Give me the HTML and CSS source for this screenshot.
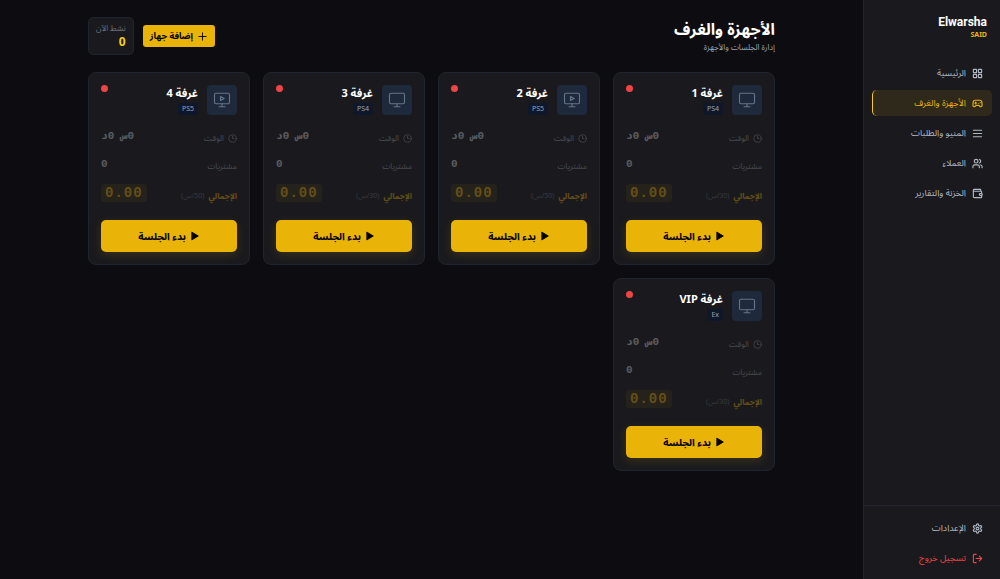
FILE: index.html
```html
<!DOCTYPE html>
<html lang="ar" dir="rtl">
<head>
    <meta charset="UTF-8">
    <meta name="viewport" content="width=device-width, initial-scale=1.0">
    <title>Elwarsha - الأجهزة والغرف</title>
    <link rel="stylesheet" href="styles.css">
</head>
<body>
    <!-- Icons -->
    <svg class="sprite" aria-hidden="true">
        <symbol id="i-grid" viewBox="0 0 24 24"><rect x="3" y="3" width="7" height="7" rx="1"/><rect x="14" y="3" width="7" height="7" rx="1"/><rect x="14" y="14" width="7" height="7" rx="1"/><rect x="3" y="14" width="7" height="7" rx="1"/></symbol>
        <symbol id="i-pad" viewBox="0 0 24 24"><path d="M6 11h4M8 9v4M15 12h.01M18 10h.01"/><path d="M17.3 5H6.7a4 4 0 0 0-4 3.6C2.6 9.400 2 14.500 2 16a3 3 0 0 0 3 3c1 0 1.500-.5 2-1l1.400-1.400A2 2 0 0 1 9.800 16h4.400a2 2 0 0 1 1.400.6L17 18c.5.5 1 1 2 1a3 3 0 0 0 3-3c0-1.500-.6-6.600-.7-7.400A4 4 0 0 0 17.300 5z"/></symbol>
        <symbol id="i-menu" viewBox="0 0 24 24"><path d="M3 5h18M3 12h18M3 19h18"/></symbol>
        <symbol id="i-users" viewBox="0 0 24 24"><path d="M16 21v-2a4 4 0 0 0-4-4H6a4 4 0 0 0-4 4v2"/><circle cx="9" cy="7" r="4"/><path d="M22 21v-2a4 4 0 0 0-3-3.870M16 3.130a4 4 0 0 1 0 7.750"/></symbol>
        <symbol id="i-wallet" viewBox="0 0 24 24"><path d="M19 7V4a1 1 0 0 0-1-1H5a2 2 0 0 0 0 4h15a1 1 0 0 1 1 1v4h-3a2 2 0 0 0 0 4h3a1 1 0 0 0 1-1v-2a1 1 0 0 0-1-1"/><path d="M3 5v14a2 2 0 0 0 2 2h15a1 1 0 0 0 1-1v-4"/></symbol>
        <symbol id="i-gear" viewBox="0 0 24 24"><path d="M12.220 2h-.44a2 2 0 0 0-2 2v.18a2 2 0 0 1-1 1.730l-.43.25a2 2 0 0 1-2 0l-.15-.08a2 2 0 0 0-2.730.73l-.22.38a2 2 0 0 0 .73 2.730l.15.1a2 2 0 0 1 1 1.720v.51a2 2 0 0 1-1 1.740l-.15.09a2 2 0 0 0-.73 2.730l.22.38a2 2 0 0 0 2.730.73l.15-.08a2 2 0 0 1 2 0l.43.25a2 2 0 0 1 1 1.730V20a2 2 0 0 0 2 2h.44a2 2 0 0 0 2-2v-.18a2 2 0 0 1 1-1.730l.43-.25a2 2 0 0 1 2 0l.15.08a2 2 0 0 0 2.730-.73l.22-.39a2 2 0 0 0-.73-2.730l-.15-.08a2 2 0 0 1-1-1.740v-.5a2 2 0 0 1 1-1.740l.15-.09a2 2 0 0 0 .73-2.730l-.22-.38a2 2 0 0 0-2.730-.73l-.15.08a2 2 0 0 1-2 0l-.43-.25a2 2 0 0 1-1-1.730V4a2 2 0 0 0-2-2z"/><circle cx="12" cy="12" r="3"/></symbol>
        <symbol id="i-logout" viewBox="0 0 24 24"><path d="M9 21H5a2 2 0 0 1-2-2V5a2 2 0 0 1 2-2h4M16 17l5-5-5-5M21 12H9"/></symbol>
        <symbol id="i-monitor" viewBox="0 0 24 24"><rect x="2" y="3" width="20" height="14" rx="2"/><path d="M8 21h8M12 17v4"/></symbol>
        <symbol id="i-monitor-play" viewBox="0 0 24 24"><rect x="2" y="3" width="20" height="14" rx="2"/><path d="M8 21h8M12 17v4M10 7.500v5l5-2.500z"/></symbol>
        <symbol id="i-clock" viewBox="0 0 24 24"><circle cx="12" cy="12" r="10"/><path d="M12 6v6h4"/></symbol>
        <symbol id="i-plus" viewBox="0 0 24 24"><path d="M4 12h16M12 4v16"/></symbol>
        <symbol id="i-play" viewBox="0 0 24 24"><path d="M5 3l15 9-15 9z"/></symbol>
    </svg>

    <div class="layout">
        <aside class="sidebar">
            <div class="brand">
                <div class="brand-name">Elwarsha</div>
                <div class="brand-sub">SAID</div>
            </div>
            <nav class="nav">
                <a href="#"><svg class="icon"><use href="#i-grid"/></svg>الرئيسية</a>
                <a href="#" class="active"><svg class="icon"><use href="#i-pad"/></svg>الأجهزة والغرف</a>
                <a href="#"><svg class="icon"><use href="#i-menu"/></svg>المنيو والطلبات</a>
                <a href="#"><svg class="icon"><use href="#i-users"/></svg>العملاء</a>
                <a href="#"><svg class="icon"><use href="#i-wallet"/></svg>الخزنة والتقارير</a>
            </nav>
            <div class="nav nav-bottom">
                <a href="#"><svg class="icon"><use href="#i-gear"/></svg>الإعدادات</a>
                <a href="#" class="logout"><svg class="icon"><use href="#i-logout"/></svg>تسجيل خروج</a>
            </div>
        </aside>

        <main class="main">
            <div class="container">
                <header class="header">
                    <div>
                        <h1>الأجهزة والغرف</h1>
                        <p class="subtitle">إدارة الجلسات والأجهزة</p>
                    </div>
                    <div class="actions">
                        <button class="btn-add"><svg class="icon"><use href="#i-plus"/></svg>إضافة جهاز</button>
                        <div class="stat">
                            <div class="stat-label">نشط الآن</div>
                            <div class="stat-value">0</div>
                        </div>
                    </div>
                </header>

                <div class="grid">
                    <article class="card">
                        <div class="card-head">
                            <div class="device"><svg class="icon"><use href="#i-monitor"/></svg></div>
                            <div class="info"><h2>غرفة 1</h2><span class="tag">PS4</span></div>
                            <span class="dot"></span>
                        </div>
                        <div class="details">
                            <div class="row"><span class="label"><svg class="icon"><use href="#i-clock"/></svg>الوقت</span><span class="value">0س 0د</span></div>
                            <div class="row"><span class="label">مشتريات</span><span class="value">0</span></div>
                            <div class="row total"><span class="label"><b>الإجمالي</b><small>(30/س)</small></span><span class="price">0.00</span></div>
                        </div>
                        <button class="btn-start"><svg class="icon"><use href="#i-play"/></svg>بدء الجلسة</button>
                    </article>
                    <article class="card">
                        <div class="card-head">
                            <div class="device"><svg class="icon"><use href="#i-monitor-play"/></svg></div>
                            <div class="info"><h2>غرفة 2</h2><span class="tag">PS5</span></div>
                            <span class="dot"></span>
                        </div>
                        <div class="details">
                            <div class="row"><span class="label"><svg class="icon"><use href="#i-clock"/></svg>الوقت</span><span class="value">0س 0د</span></div>
                            <div class="row"><span class="label">مشتريات</span><span class="value">0</span></div>
                            <div class="row total"><span class="label"><b>الإجمالي</b><small>(50/س)</small></span><span class="price">0.00</span></div>
                        </div>
                        <button class="btn-start"><svg class="icon"><use href="#i-play"/></svg>بدء الجلسة</button>
                    </article>
                    <article class="card">
                        <div class="card-head">
                            <div class="device"><svg class="icon"><use href="#i-monitor"/></svg></div>
                            <div class="info"><h2>غرفة 3</h2><span class="tag">PS4</span></div>
                            <span class="dot"></span>
                        </div>
                        <div class="details">
                            <div class="row"><span class="label"><svg class="icon"><use href="#i-clock"/></svg>الوقت</span><span class="value">0س 0د</span></div>
                            <div class="row"><span class="label">مشتريات</span><span class="value">0</span></div>
                            <div class="row total"><span class="label"><b>الإجمالي</b><small>(30/س)</small></span><span class="price">0.00</span></div>
                        </div>
                        <button class="btn-start"><svg class="icon"><use href="#i-play"/></svg>بدء الجلسة</button>
                    </article>
                    <article class="card">
                        <div class="card-head">
                            <div class="device"><svg class="icon"><use href="#i-monitor-play"/></svg></div>
                            <div class="info"><h2>غرفة 4</h2><span class="tag">PS5</span></div>
                            <span class="dot"></span>
                        </div>
                        <div class="details">
                            <div class="row"><span class="label"><svg class="icon"><use href="#i-clock"/></svg>الوقت</span><span class="value">0س 0د</span></div>
                            <div class="row"><span class="label">مشتريات</span><span class="value">0</span></div>
                            <div class="row total"><span class="label"><b>الإجمالي</b><small>(50/س)</small></span><span class="price">0.00</span></div>
                        </div>
                        <button class="btn-start"><svg class="icon"><use href="#i-play"/></svg>بدء الجلسة</button>
                    </article>
                    <article class="card">
                        <div class="card-head">
                            <div class="device"><svg class="icon"><use href="#i-monitor"/></svg></div>
                            <div class="info"><h2>غرفة VIP</h2><span class="tag">Ex</span></div>
                            <span class="dot"></span>
                        </div>
                        <div class="details">
                            <div class="row"><span class="label"><svg class="icon"><use href="#i-clock"/></svg>الوقت</span><span class="value">0س 0د</span></div>
                            <div class="row"><span class="label">مشتريات</span><span class="value">0</span></div>
                            <div class="row total"><span class="label"><b>الإجمالي</b><small>(30/س)</small></span><span class="price">0.00</span></div>
                        </div>
                        <button class="btn-start"><svg class="icon"><use href="#i-play"/></svg>بدء الجلسة</button>
                    </article>
                </div>
            </div>
        </main>
    </div>
</body>
</html>
```

FILE: styles.css
```css
* {
    box-sizing: border-box;
}

body {
    margin: 0;
    background-color: #0d0d11;
    color: #fff;
    font-family: "Noto Sans", "Noto Sans Arabic", sans-serif;
    font-size: 9px;
}

h1, h2, p {
    margin: 0;
}

button {
    border: none;
    font-family: inherit;
    font-weight: bold;
    color: #000;
    background-color: #eab308;
    cursor: pointer;
}

.sprite {
    display: none;
}

.icon {
    width: 11px;
    height: 11px;
    flex-shrink: 0;
    fill: none;
    stroke: currentColor;
    stroke-width: 2;
    stroke-linecap: round;
    stroke-linejoin: round;
}

.layout {
    display: flex;
    min-height: 100vh;
}

/* Sidebar */
.sidebar {
    width: 137px;
    flex-shrink: 0;
    display: flex;
    flex-direction: column;
    background-color: #1a1a1e;
    border-left: 1px solid #1f2530;
}

.brand {
    direction: ltr;
    text-align: right;
    padding: 14px 13px 19px;
    font-weight: bold;
}

.brand-name {
    font-family: Roboto, sans-serif;
    font-size: 12px;
    line-height: 16px;
}

.brand-sub {
    font-size: 7px;
    line-height: 9px;
    color: #eab308;
}

.nav {
    display: flex;
    flex-direction: column;
    gap: 4px;
    padding: 2px 8px;
}

.nav a {
    display: flex;
    align-items: center;
    gap: 6px;
    height: 26px;
    padding: 0 9px;
    border-radius: 5px;
    color: #b0b7c3;
    text-decoration: none;
}

.nav a.active {
    color: #eab308;
    background-color: #2f291b;
    border-left: 1px solid #facc15;
}

.nav .icon {
    stroke-width: 2.5;
}

.nav-bottom {
    margin-top: auto;
    border-top: 1px solid #24272f;
    padding: 9px 8px 8px;
}

.nav a.logout {
    color: #ef4444;
}

/* Page */
.main {
    flex: 1;
    padding: 17px 16px;
}

.container {
    max-width: 687px;
    margin: 0 auto;
}

.header {
    display: flex;
    justify-content: space-between;
    align-items: center;
    margin-bottom: 17px;
}

h1 {
    font-size: 16px;
    line-height: 22px;
}

.subtitle {
    font-size: 8px;
    line-height: 14px;
    color: #9ca3af;
}

.actions {
    display: flex;
    align-items: center;
    gap: 9px;
}

.btn-add {
    display: flex;
    align-items: center;
    gap: 4px;
    height: 22px;
    padding: 0 7px;
    border-radius: 3px;
    font-size: 9px;
}

.stat {
    padding: 4px 7px;
    border: 1px solid #1f2530;
    border-radius: 5px;
    background-color: #1a1a1e;
}

.stat-label {
    font-size: 8px;
    line-height: 12px;
    color: #6b7280;
}

.stat-value {
    font-size: 12px;
    line-height: 16px;
    font-weight: bold;
    color: #facc15;
}

/* Cards */
.grid {
    display: grid;
    grid-template-columns: repeat(4, 1fr);
    gap: 13px;
}

.card {
    padding: 12px;
    border: 1px solid #1f2530;
    border-radius: 8px;
    background-color: #1a1a1e;
}

.card-head {
    display: flex;
    align-items: flex-start;
    gap: 9px;
}

.device {
    display: grid;
    place-items: center;
    width: 30px;
    height: 30px;
    border-radius: 4px;
    background-color: #1e293b;
    color: #64748b;
}

.device .icon {
    width: 18px;
    height: 18px;
    stroke-width: 1.5;
}

.info {
    flex: 1;
}

h2 {
    font-size: 11px;
    line-height: 16px;
}

.tag {
    display: block;
    width: fit-content;
    margin-top: 2px;
    padding: 0 4px;
    border-radius: 2px;
    font-size: 7px;
    line-height: 12px;
    color: #94a3b8;
    background-color: #0f172a;
}

.dot {
    width: 7px;
    height: 7px;
    border-radius: 50%;
    background-color: #ef4444;
}

.details {
    margin: 6px 0 15px;
    opacity: 0.35;
}

.row {
    display: flex;
    justify-content: space-between;
    align-items: flex-end;
    height: 28px;
    padding-bottom: 5px;
}

.row.total {
    padding-bottom: 3px;
}

.label {
    display: flex;
    align-items: center;
    gap: 4px;
    font-size: 8px;
    line-height: 12px;
    color: #9ca3af;
}

.label .icon {
    width: 9px;
    height: 9px;
}

.value, .price {
    font-family: "Liberation Mono", monospace;
    font-weight: bold;
    line-height: 16px;
}

.value {
    font-size: 11px;
    color: #d1d5db;
}

.label b {
    color: #eab308;
}

.label small {
    font-size: 7px;
    color: #6b7280;
}

.price {
    padding: 0 4px;
    border-radius: 3px;
    font-size: 14px;
    line-height: 18px;
    letter-spacing: 1px;
    color: #eab308;
    background-color: #3a3018;
}

.btn-start {
    display: flex;
    align-items: center;
    justify-content: center;
    gap: 4px;
    width: 100%;
    height: 32px;
    border-radius: 5px;
    font-size: 10px;
    box-shadow: 0 3px 10px rgba(234, 179, 8, 0.15);
}

.btn-start .icon {
    width: 10px;
    height: 10px;
    fill: currentColor;
}
```
